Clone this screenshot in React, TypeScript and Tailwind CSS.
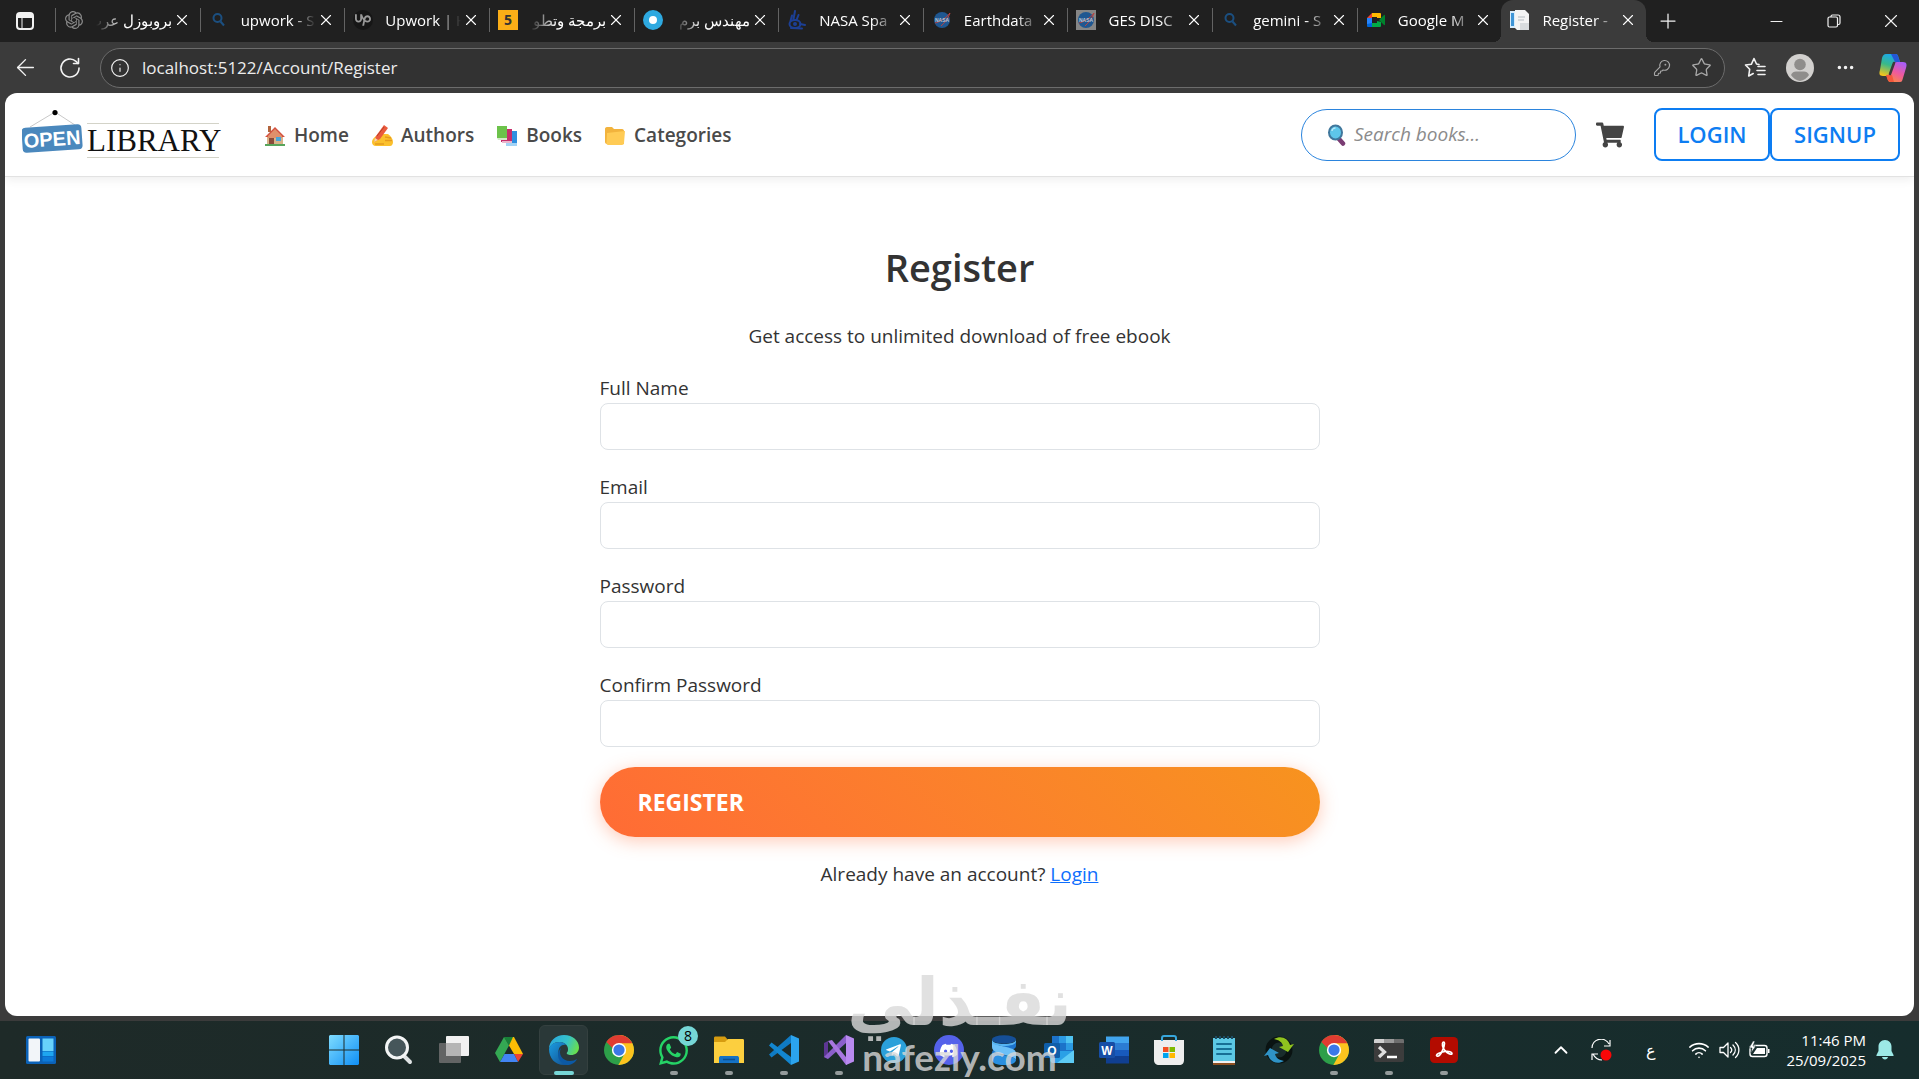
import type { ReactNode } from 'react';
import { ArrowLeft, ChevronUp, Info, KeyRound, Minus, MoreHorizontal, Plus, Star, Wifi, X } from 'lucide-react';
import { FaDiscord, FaShoppingCart, FaTelegramPlane, FaWhatsapp } from 'react-icons/fa';
import { SiOpenai, SiUpwork } from 'react-icons/si';

/* ---------- tab favicons ---------- */

const SearchFavicon = () => (
  <svg viewBox="0 0 20 20" className="size-5" fill="none" stroke="#1b4f80" strokeWidth="2">
    <circle cx="8.5" cy="8" r="4" />
    <path d="M11.5 11.5 15 15.5" />
  </svg>
);

const NasaFavicon = () => (
  <svg viewBox="0 0 20 20" className="size-5">
    <circle cx="10" cy="10" r="8" fill="#1f5791" />
    <path d="M3 13C8 12 14 8 18 3c-2 6-5 9-9 13" fill="none" stroke="#b8423f" strokeWidth="1" />
    <text x="10" y="12" textAnchor="middle" fontSize="5" fontWeight="700" fill="#b9c7d6" fontFamily="Liberation Sans">NASA</text>
  </svg>
);

const HandFavicon = () => (
  <svg viewBox="0 0 20 20" className="size-5" fill="none" stroke="#1c3f94" strokeWidth="2" strokeLinecap="round">
    <ellipse cx="8" cy="14" rx="5.5" ry="4" />
    <path d="M3.500 11 5 5.500M6.500 9 8 1M9.500 10l2-5M13 14l5 1M4 18l11 .500" />
    <circle cx="8" cy="14" r="1" />
  </svg>
);

const MeetFavicon = () => (
  <svg viewBox="0 0 20 20" className="size-5">
    <path d="M6 3 1 8h5z" fill="#ea4335" />
    <path d="M1 8h5v6H1z" fill="#2684fc" />
    <path d="M1 14v2a1 1 0 0 0 1 1h4v-4z" fill="#0066da" />
    <path d="M6 3h8a1 1 0 0 1 1 1v4h-4V7H6z" fill="#ffba00" />
    <path d="M6 13h5v-2l4 1v4a1 1 0 0 1-1 1H6z" fill="#00ac47" />
    <path d="m13 10 5-5c.5-.4 1 0 1 .5v9c0 .5-.5.9-1 .5z" fill="#00832d" />
  </svg>
);

const PageFavicon = () => (
  <svg viewBox="0 0 20 20" className="size-5">
    <path d="M0 1h5v17H0z" fill="#d7ecfb" />
    <path d="M1 3h3v13H1z" fill="#3f95d6" />
    <path d="M5 0h10l4 4v16H7l-2-2z" fill="#f4f4f4" />
    <path d="M8 7h7M8 10h6" stroke="#b5bcc2" />
    <path d="M10 13h9v7h-9z" fill="#d9dcde" />
  </svg>
);

type Tab = { title: string; icon: ReactNode; rtl?: boolean; active?: boolean };

const tabs: Tab[] = [
  { title: 'بروبوزل عرب', icon: <SiOpenai className="size-[18px] text-[#8a8a8a]" />, rtl: true },
  { title: 'upwork - S', icon: <SearchFavicon /> },
  {
    title: 'Upwork | H',
    icon: (
      <span className="flex size-5 items-center justify-center rounded-full bg-[#161616] text-[#999]">
        <SiUpwork className="size-4" />
      </span>
    ),
  },
  {
    title: 'برمجة وتطو',
    icon: (
      <span className="flex size-5 items-center justify-center bg-[#fbae17] text-sm font-bold text-[#333]">5</span>
    ),
    rtl: true,
  },
  { title: 'مهندس برم', icon: <span className="size-5 rounded-full border-[6px] border-[#2ea9e0] bg-white" />, rtl: true },
  { title: 'NASA Spa', icon: <HandFavicon /> },
  { title: 'Earthdata', icon: <NasaFavicon /> },
  {
    title: 'GES DISC',
    icon: (
      <span className="size-5 bg-[#868686]">
        <NasaFavicon />
      </span>
    ),
  },
  { title: 'gemini - S', icon: <SearchFavicon /> },
  { title: 'Google M', icon: <MeetFavicon /> },
  { title: 'Register -', icon: <PageFavicon />, active: true },
];

const BrowserTab = ({ tab }: { tab: Tab }) => (
  <div
    className={`relative flex min-w-0 flex-1 items-center pb-0.5 ${
      tab.active
        ? 'rounded-t-xl bg-[#3b3b3b] before:absolute before:bottom-0 before:-left-2 before:size-2 before:bg-[radial-gradient(circle_at_0_0,transparent_8px,#3b3b3b_8px)] after:absolute after:-right-2 after:bottom-0 after:size-2 after:bg-[radial-gradient(circle_at_100%_0,transparent_8px,#3b3b3b_8px)]'
        : ''
    }`}
  >
    <span className={`h-6 w-px shrink-0 ${tab.active ? '' : 'bg-[#636363]'}`} />
    <span className="ml-2 flex size-5 shrink-0 items-center justify-center">{tab.icon}</span>
    <span
      dir={tab.rtl ? 'rtl' : 'ltr'}
      className={`ml-3 min-w-0 flex-1 overflow-hidden text-[15px] leading-6 whitespace-nowrap text-white ${
        tab.rtl
          ? '[mask-image:linear-gradient(to_left,black_65%,transparent)]'
          : '[mask-image:linear-gradient(to_right,black_70%,transparent)]'
      }`}
    >
      {tab.title}
    </span>
    <button type="button" aria-label="Close tab" className="mr-2 flex size-5 items-center justify-center text-white">
      <X size={18} strokeWidth={1.5} />
    </button>
  </div>
);

const CopilotIcon = () => (
  <svg viewBox="0 0 32 32" className="size-8">
    <defs>
      <linearGradient id="cp1" x1="0.6" y1="0" x2="0.3" y2="1">
        <stop offset="0" stopColor="#1aa7f0" />
        <stop offset=".5" stopColor="#38b98a" />
        <stop offset="1" stopColor="#f3c51d" />
      </linearGradient>
      <linearGradient id="cp2" x1="0.7" y1="0" x2="0.2" y2="1">
        <stop offset="0" stopColor="#a95df5" />
        <stop offset=".5" stopColor="#ef5a9c" />
        <stop offset="1" stopColor="#fb8b3c" />
      </linearGradient>
    </defs>
    <path d="M9 2h9c3 0 3 2 4 5l1 3h-4c-3 0-3.500 3-4.500 6l-1.500 4c-1 3-2 4-4 4H6c-4 0-4-3-3-6L5 6c1-3 2-4 4-4z" fill="url(#cp1)" />
    <path d="M14 2h4c3 0 3 2 4 5l1 3h-5z" fill="#2457d6" />
    <path d="M23 30h-9c-3 0-3-2-4-5l-1-2c3 0 4-1 5-4l2-5c1-3 2-4 4-4h6c4 0 4 3 3 6l-3 10c-1 3-1 4-3 4z" fill="url(#cp2)" />
    <path d="M9 23h6l2 7h-3c-2 0-3-1-4-4z" fill="#f3583c" />
    <path d="m17 11-4 11" stroke="#3b3b3b" strokeWidth="2.500" strokeLinecap="round" />
  </svg>
);

const BrowserChrome = () => (
  <header className="text-[#f2f2f2]">
    <div className="flex h-[42px] bg-[#202020]">
      <button type="button" aria-label="Tab actions" className="flex w-[55px] shrink-0 items-center pl-4">
        <svg viewBox="0 0 18 18" className="size-[18px]" fill="none" stroke="currentColor" strokeWidth="2">
          <rect x="1" y="1" width="16" height="16" rx="3" />
          <path d="M1 4h16" strokeWidth="4" />
          <path d="M6 5v12" strokeWidth="1" />
        </svg>
      </button>
      <div className="flex min-w-0 flex-1">
        {tabs.map((t) => (
          <BrowserTab key={t.title} tab={t} />
        ))}
      </div>
      <div className="flex w-[273px] shrink-0 items-center">
        <button type="button" aria-label="New tab" className="mr-auto ml-2 flex w-7 justify-center">
          <Plus size={24} strokeWidth={1.25} />
        </button>
        <button type="button" aria-label="Minimize" className="flex w-[58px] justify-center">
          <Minus size={19} strokeWidth={1.25} />
        </button>
        <button type="button" aria-label="Restore" className="flex w-[58px] justify-center">
          <svg viewBox="0 0 14 14" className="size-[14px]" fill="none" stroke="currentColor" strokeWidth="1.2">
            <rect x="1" y="3" width="9.5" height="10" rx="1.5" />
            <path d="M4 3V2.5C4 1.5 4.500 1 5.500 1H11c1.500 0 2 .5 2 2v6c0 1-.5 1.500-1.500 1.500h-1" />
          </svg>
        </button>
        <button type="button" aria-label="Close" className="flex w-[56px] justify-center">
          <X size={22} strokeWidth={1.25} />
        </button>
      </div>
    </div>

    <div className="flex h-[51px] items-center bg-[#3b3b3b]">
      <button type="button" aria-label="Back" className="flex w-[50px] justify-center">
        <ArrowLeft size={27} strokeWidth={1.25} />
      </button>
      <button type="button" aria-label="Refresh" className="flex w-10 justify-center">
        <svg viewBox="0 0 22 22" className="size-[22px]" fill="none" stroke="currentColor" strokeWidth="1.6" strokeLinecap="round" strokeLinejoin="round">
          <path d="M20 11a9 9 0 1 1-3-6.700L19 6.500" />
          <path d="M19.500 1.500v5h-5" />
        </svg>
      </button>
      <div className="ml-[10px] flex h-10 min-w-0 flex-1 items-center rounded-full border border-[#6c6c6c] bg-[#323232] pr-3 pl-[9px]">
        <Info size={20} strokeWidth={1.4} className="shrink-0" />
        <input
          aria-label="Address"
          defaultValue="localhost:5122/Account/Register"
          className="ml-3 min-w-0 flex-1 bg-transparent text-[17px] text-[#ececec] outline-none"
        />
        <button type="button" aria-label="Saved password" className="mr-5 text-[#a8a8a8]">
          <KeyRound size={18} strokeWidth={1.5} />
        </button>
        <button type="button" aria-label="Add to favorites" className="text-[#a8a8a8]">
          <Star size={21} strokeWidth={1.5} />
        </button>
      </div>
      <button type="button" aria-label="Favorites" className="ml-2 flex w-11 justify-center">
        <svg viewBox="0 0 22 22" className="size-[22px]" fill="none" stroke="currentColor" strokeWidth="1.600" strokeLinecap="round" strokeLinejoin="round">
          <path d="M15 7.500 12.500 7 10 1.500 7.300 7.300 1.500 8l4.200 4.200-1 6.800 4.500-2.500M14 9.500h7M13 13.500h8M14 17.500h7" />
        </svg>
      </button>
      <button type="button" aria-label="Profile" className="flex w-[46px] justify-center">
        <svg viewBox="0 0 28 28" className="size-7">
          <circle cx="14" cy="14" r="14" fill="#d2d0ce" />
          <circle cx="14" cy="10.500" r="5.800" fill="#8f8d8b" />
          <path d="M5 21c1-2.500 3-3.500 5-3.500h8c2 0 4 1 5 3.500a14 14 0 0 1-9 6 14 14 0 0 1-9-6z" fill="#8f8d8b" />
        </svg>
      </button>
      <button type="button" aria-label="Settings and more" className="flex w-11 justify-center">
        <MoreHorizontal size={21} />
      </button>
      <button type="button" aria-label="Copilot" className="flex w-[52px] justify-center">
        <CopilotIcon />
      </button>
    </div>
  </header>
);

/* ---------- site navbar ---------- */

const Logo = () => (
  <svg viewBox="0 2 200 50" className="h-[50px] w-[200px]" role="img" aria-label="Open Library">
    <path d="M8 19 33 4l23 15" fill="none" stroke="#c9c9c9" />
    <circle cx="33" cy="4.600" r="2.600" fill="#000" />
    <g transform="rotate(-4 30 30)">
      <rect x="0" y="18" width="60" height="25" rx="4" fill="#4a88bd" />
      <text x="30" y="38" textAnchor="middle" fontFamily="Liberation Sans" fontWeight="700" fontSize="20" fill="#fff">OPEN</text>
    </g>
    <path d="M65 15.500h132M65 49.500h132" stroke="#d3d3c8" />
    <text x="65" y="43" fontFamily="Liberation Serif" fontSize="31" fill="#111">LIBRARY</text>
  </svg>
);

const HouseIcon = () => (
  <svg viewBox="0 0 22 22" className="size-[22px]">
    <path d="M4 1h3v6H4z" fill="#b2643c" />
    <path d="M3 10h16v10H3z" fill="#d8b48a" />
    <path d="M11 2 1 12h3l7-7 7 7h3z" fill="#d3503f" />
    <path d="M11 4 4 11v2h14v-2z" fill="#e0906b" />
    <path d="M5 13h5v7H5z" fill="#8a4b3a" />
    <path d="M12 12h5v4h-5z" fill="#4aa5d8" />
    <path d="M1 19h20v2H1z" fill="#58a55c" />
  </svg>
);

const WritingIcon = () => (
  <svg viewBox="0 0 22 22" className="size-[22px]">
    <path d="M1 17c0-3 3-6 8-8l8 0c3 2 5 5 5 8 0 2-1 4-3 4H5c-3 0-4-2-4-4z" fill="#fbc02d" />
    <path d="m14 12 6 1M14 15.500h7M4 19h9" fill="none" stroke="#e59a1f" strokeWidth="1.300" />
    <path d="m3 17 2-6L13 0l4 3-8 11z" fill="#ea5a3d" />
    <path d="M6 11 13 2" stroke="#b93e2a" />
    <path d="m3 17 1-4 3 2z" fill="#f7d9a8" />
  </svg>
);

const BooksIcon = () => (
  <svg viewBox="0 0 22 22" className="size-[22px]">
    <path d="M10 6h11v14H10z" fill="#2f8fe0" />
    <path d="M10 18h11v3H10z" fill="#a3d3f5" />
    <path d="M5 4h11v13H5z" fill="#c72d6b" />
    <path d="M6 16h10v2H6z" fill="#e9b7cc" />
    <path d="M1 1h10v12H1z" fill="#6cc24a" />
    <path d="M1 13h10v2H2z" fill="#d4e9c8" />
  </svg>
);

const FolderIcon = () => (
  <svg viewBox="0 0 22 22" className="size-[22px]">
    <path d="M1 4c0-1 .5-2 2-2h5l2 2h8c1.500 0 2 1 2 2v13H3c-1 0-2-1-2-2z" fill="#f2b33d" />
    <path d="M3 8 21 6l-1 12c0 1-1 2-2 2H4c-1 0-1.500-1-1.500-2z" fill="#ffcb55" />
  </svg>
);

const MagnifierIcon = () => (
  <svg viewBox="0 0 20 22" className="h-[22px] w-5">
    <path d="m13 15 4 4.500" stroke="#7a3c73" strokeWidth="4.500" strokeLinecap="round" />
    <ellipse cx="9.500" cy="8.500" rx="6.500" ry="7" fill="#5ec6ea" stroke="#40779c" strokeWidth="2" />
    <path d="M6 7c0-2 2-3 3.500-3" fill="none" stroke="#b9e9f8" strokeWidth="1.500" />
  </svg>
);

const navLinks = [
  { label: 'Home', icon: <HouseIcon /> },
  { label: 'Authors', icon: <WritingIcon /> },
  { label: 'Books', icon: <BooksIcon /> },
  { label: 'Categories', icon: <FolderIcon /> },
];

const Navbar = () => (
  <nav className="flex h-[84px] items-center border-b border-[#e2e2e2] pr-[14px] pl-[17px] shadow-[0_2px_10px_rgba(0,0,0,0.08)]">
    <a href="#" className="shrink-0">
      <Logo />
    </a>
    <div className="ml-[42px] flex items-center gap-[22px] pt-0.5">
      {navLinks.map((l) => (
        <a key={l.label} href="#" className="flex items-center gap-2 text-[19px] font-semibold text-[#4a4a4a]">
          {l.icon}
          {l.label}
        </a>
      ))}
    </div>
    <div className="ml-auto flex items-center">
      <label className="flex h-[52px] w-[275px] items-center gap-2 rounded-full border border-[#2b84dd] px-6">
        <MagnifierIcon />
        <input
          type="search"
          aria-label="Search books"
          placeholder="Search books..."
          className="min-w-0 flex-1 bg-transparent text-[19px] italic outline-none placeholder:text-[#8b8b8b]"
        />
      </label>
      <a href="#" aria-label="Cart" className="ml-5 text-[#444]">
        <FaShoppingCart size={28} />
      </a>
      <a href="#" className="ml-[30px] flex h-[53px] w-[116px] items-center justify-center rounded-lg border-2 border-[#0d7df2] text-[22px] font-semibold text-[#0d7df2]">
        LOGIN
      </a>
      <a href="#" className="flex h-[53px] w-[130px] items-center justify-center rounded-lg border-2 border-[#0d7df2] text-[22px] font-semibold text-[#0d7df2]">
        SIGNUP
      </a>
    </div>
  </nav>
);

/* ---------- register form ---------- */

const Field = ({ id, label, type = 'text' }: { id: string; label: string; type?: string }) => (
  <div>
    <label htmlFor={id} className="block leading-[30px]">
      {label}
    </label>
    <input id={id} type={type} className="block h-[47px] w-full rounded-lg border border-[#dee2e6] px-4 outline-none" />
  </div>
);

const RegisterForm = () => (
  <main className="mx-auto w-full max-w-[720px] flex-1 pt-[66px] text-[19px] text-[#333]">
    <h1 className="text-center text-[38px] leading-[48px] font-semibold">Register</h1>
    <p className="mt-[30px] text-center leading-[30px]">Get access to unlimited download of free ebook</p>
    <form className="mt-[22px]" onSubmit={(e) => e.preventDefault()}>
      <div className="space-y-[22px]">
        <Field id="fullName" label="Full Name" />
        <Field id="email" label="Email" type="email" />
        <Field id="password" label="Password" type="password" />
        <Field id="confirmPassword" label="Confirm Password" type="password" />
      </div>
      <button
        type="submit"
        className="mt-5 flex h-[70px] w-full items-center rounded-full bg-linear-45 from-[#ff6b35] to-[#f7931e] px-[38px] text-[23px] font-bold text-white shadow-[0_4px_18px_rgba(255,107,53,0.35)]"
      >
        REGISTER
      </button>
    </form>
    <p className="mt-[22px] text-center leading-[30px]">
      Already have an account?{' '}
      <a href="#" className="text-[#0d6efd] underline">
        Login
      </a>
    </p>
  </main>
);

/* ---------- taskbar ---------- */

const WindowsIcon = () => (
  <svg viewBox="0 0 30 30" className="size-[30px]">
    <defs>
      <linearGradient id="win" x1="0" y1="0" x2="1" y2="1">
        <stop offset="0" stopColor="#7fdcff" />
        <stop offset="1" stopColor="#0f8ff5" />
      </linearGradient>
    </defs>
    <path d="M1 0h13.500v14.500H0V1zM15.500 0H29l1 1v13.500H15.500zM0 15.500h14.500V30H1l-1-1zM15.500 15.500H30V29l-1 1H15.500z" fill="url(#win)" />
  </svg>
);

const TaskSearchIcon = () => (
  <svg viewBox="0 0 30 30" className="size-[30px]">
    <path d="m19 20 7 7" stroke="#dfe3e4" strokeWidth="4" strokeLinecap="round" />
    <circle cx="13" cy="12.500" r="10.500" fill="#46565a" stroke="#f3f5f5" strokeWidth="3" />
  </svg>
);

const TaskViewIcon = () => (
  <svg viewBox="0 0 30 30" className="size-[30px]">
    <rect x="7" y="1" width="23" height="20" rx="1" fill="#f1f1f1" />
    <rect x="0" y="8" width="22" height="20" rx="1" fill="#6f6f6f" fillOpacity=".85" />
    <path d="M7 8h15v13H7z" fill="#b5b5b5" />
  </svg>
);

const DriveIcon = () => (
  <svg viewBox="0 0 30 30" className="size-[30px]">
    <path d="M10 2h10l-5 8.500z" fill="#188038" />
    <path d="M10 2 1 18l5 9 9-16.500z" fill="#34a853" />
    <path d="M20 2h-1l-4 8.500 5 8.500h9z" fill="#fbbc04" />
    <path d="M29 19H20l4 8z" fill="#ea4335" />
    <path d="M10.500 19H20l4 8H6z" fill="#4285f4" />
  </svg>
);

const EdgeIcon = () => (
  <svg viewBox="0 0 30 30" className="size-[30px]">
    <defs>
      <linearGradient id="edgeTop" x1="0" y1="0.3" x2="1" y2="0.6">
        <stop offset="0" stopColor="#2aa8dd" />
        <stop offset=".55" stopColor="#35c1c9" />
        <stop offset="1" stopColor="#6be04a" />
      </linearGradient>
      <linearGradient id="edgeMid" x1="0" y1="0" x2="1" y2="1">
        <stop offset="0" stopColor="#1b9de2" />
        <stop offset="1" stopColor="#114a8b" />
      </linearGradient>
    </defs>
    <path d="M15 0c9 0 15 6 15 12.500 0 5-4 7.500-8 7.500-3 0-5-1-4-2.500 1-1.200 1-2 1-3.500 0-4-4-7-8.500-7C5 7 1 10.500 0 14 0 6 7 0 15 0z" fill="url(#edgeTop)" />
    <path d="M0 14C1 10 5 7 10.500 7c3 0 5.500 1 7 3-5-1-8 2-8 7 0 7 5 12 11 12-2 .8-4 1-5.500 1C6 30 0 23 0 14z" fill="url(#edgeMid)" />
    <path d="M12 13c-3 6 1 13 9 13 3 0 5-1 7-2-2 4-6 6-10 6-8-1-12-11-6-17z" fill="#0c59a4" />
  </svg>
);

const ChromeIcon = () => (
  <svg viewBox="4 4 40 40" className="size-[30px]">
    <circle cx="24" cy="24" r="20" fill="#2d9f49" />
    <path d="M24 4v20l8 4-8.840 16H24a20 20 0 0 0 0-40z" fill="#fcc31e" />
    <path d="M41.840 15H24v13l-3-1L7.140 13.260C10.680 7.690 16.910 4 24 4c7.800 0 14.550 4.480 17.840 11z" fill="#e03c31" />
    <circle cx="24" cy="24" r="9.500" fill="#fff" />
    <circle cx="24" cy="24" r="7.500" fill="#3b78e7" />
  </svg>
);

const WhatsAppIcon = () => (
  <span className="relative">
    <FaWhatsapp size={33} className="text-[#25d366]" />
    <span className="absolute -top-2 -right-2 flex size-5 items-center justify-center rounded-full bg-[#76d6d6] text-sm text-black">8</span>
  </span>
);

const ExplorerIcon = () => (
  <svg viewBox="0 0 30 30" className="size-[30px]">
    <path d="M0 3c0-1 .5-1.500 1.500-1.500H11L14 5v4H0z" fill="#d69c10" />
    <path d="M0 7h11l3-3h14.500c1 0 1.500.5 1.500 1.500V28H0z" fill="#fccf3f" />
    <path d="M5 28v-5c0-1.500 1-2 2-2h16c1 0 2 .5 2 2v5z" fill="#1572c4" />
    <path d="M9 24.500h12" stroke="#0b4f91" strokeWidth="1.500" />
  </svg>
);

const VSCodeIcon = () => (
  <svg viewBox="0 0 30 30" className="size-[30px]">
    <path d="m0 19.500 2.500 3L22 8V0z" fill="#0f7bc4" />
    <path d="m0 10.500 2.500-3L22 22v8z" fill="#1286d0" />
    <path d="m22 0 8 3.500v23L22 30z" fill="#2ba4ee" />
  </svg>
);

const VisualStudioIcon = () => (
  <svg viewBox="0 0 30 30" className="size-[30px]">
    <path d="M0 8v14l4 2V6z" fill="#5d3694" />
    <path d="M4 24 22 8V0L0 22z" fill="#8b5fcb" />
    <path d="m4 6 18 24 4-3L8 5z" fill="#a877e0" />
    <path d="m22 0 8 3.500v23L22 30z" fill="#b98af0" />
  </svg>
);

const TelegramIcon = () => (
  <span className="flex size-[26px] items-center justify-center rounded-full bg-[#2ba0da] text-white">
    <FaTelegramPlane size={17} />
  </span>
);

const DiscordIcon = () => (
  <span className="flex size-[30px] items-center justify-center rounded-full bg-[#5562ea] text-white">
    <FaDiscord size={19} />
  </span>
);

const RibbonIcon = () => (
  <svg viewBox="0 0 26 30" className="h-[30px] w-[26px]">
    <path d="M25 5v6c0 3-5 4.500-10 6L4 22c-2 1-3 2-3 3v-7c0-4 5-5 10-6.500S25 9 25 5z" fill="#1d74cc" />
    <path d="M1 5v7c0 5 7 6 13 8s11 3 11 5v-7c0-4-6-5-12-6.500S1 9 1 5z" fill="#6cc0f7" />
    <path d="M1 18v7c0 3 5 5 12 5s12-2 12-5c0-2-4-3-8-4l-4-1C6 19 1 20 1 18z" fill="#2a8fe0" />
    <ellipse cx="13" cy="4.500" rx="12" ry="4.200" fill="#154f97" />
    <path d="M1 4.500c0 6 24 6 24 0v2c0 6-24 6-24 0z" fill="#55b3f2" />
  </svg>
);

const OutlookIcon = () => (
  <svg viewBox="0 0 30 30" className="size-[30px]">
    <path d="M8 1h21v15H8z" fill="#1c72c9" />
    <path d="M15 1h7v7h-7zM22 8h7v7h-7z" fill="#2c9ae3" />
    <path d="M22 1h7v7h-7z" fill="#4fc3f1" />
    <path d="M6 16h24v12H8l-2-2z" fill="#2aa0e6" />
    <path d="m30 15-17 13h17z" fill="#5dcbf5" />
    <rect x="0" y="8" width="16" height="15" rx="1.500" fill="#0f5ea9" />
    <text x="8" y="20" textAnchor="middle" fontSize="12" fontWeight="700" fill="#fff" fontFamily="Liberation Sans">O</text>
  </svg>
);

const WordIcon = () => (
  <svg viewBox="0 0 30 30" className="size-[30px]">
    <path d="M7 1.500h23V9H7z" fill="#41a5ee" />
    <path d="M7 8h23v7H7z" fill="#2b7cd3" />
    <path d="M7 15h23v7H7z" fill="#185abd" />
    <path d="M7 21h23v7.500H7z" fill="#103f91" />
    <rect x="0" y="7" width="16" height="16" rx="1.500" fill="#174ea6" />
    <text x="8" y="19.500" textAnchor="middle" fontSize="12" fontWeight="700" fill="#fff" fontFamily="Liberation Sans">W</text>
  </svg>
);

const StoreIcon = () => (
  <svg viewBox="0 0 30 30" className="size-[30px]">
    <path d="M0 5h30v20c0 3-1.500 5-5 5H5c-3 0-5-1.500-5-5z" fill="#eeeeee" />
    <path d="M8 6V3c0-1.500.5-2 2-2h10c1.500 0 2 .5 2 2v3" fill="none" stroke="#37a7dd" strokeWidth="2" />
    <path d="M9 12h5.500v5H9z" fill="#f25022" />
    <path d="M15.500 12H21v5h-5.500z" fill="#7fba00" />
    <path d="M9 18h5.500v5H9z" fill="#00a4ef" />
    <path d="M15.500 18H21v5h-5.500z" fill="#ffb900" />
  </svg>
);

const NotepadIcon = () => (
  <svg viewBox="0 0 24 30" className="h-[30px] w-6">
    <path d="M1 25h22v5H1z" fill="#8d4f21" />
    <path d="M1 24h22v4H1z" fill="#f1f1f1" />
    <path d="M1 3h22v23H1z" fill="#5cc8e4" />
    <path d="M4 1v3M8 1v3M12 1v3M16 1v3M20 1v3" stroke="#1c4c63" strokeWidth="2" />
    <path d="M5 9h14M5 14h14M5 19h14" stroke="#176f95" strokeWidth="2" strokeLinecap="round" />
  </svg>
);

const SyncArrowsIcon = () => (
  <svg viewBox="0 0 30 30" className="size-[30px]">
    <circle cx="15" cy="15" r="10.500" fill="none" stroke="#0a1312" strokeWidth="6" />
    <path d="M10 4c7-4 14-1 16 6l4-1-6 8-9-5 4-1c-1-4-4-6-9-7z" fill="#8fc31f" />
    <path d="M20 26c-7 4-14 1-16-6l-4 1 6-8 9 5-4 1c1 4 4 6 9 7z" fill="#2f93c6" />
  </svg>
);

const TerminalIcon = () => (
  <svg viewBox="0 0 30 30" className="size-[30px]">
    <rect x="0" y="4" width="30" height="23" rx="2" fill="#3c3c3c" />
    <path d="M0 8V5.500C0 4.500.5 4 1.500 4H10v4z" fill="#d0d0d0" />
    <path d="M10 4h10v4H10z" fill="#9a9a9a" />
    <path d="M20 4h8.500c1 0 1.500.5 1.500 1.500V8H20z" fill="#6e6e6e" />
    <path d="m5 12 5.500 5L5 22" fill="none" stroke="#dedede" strokeWidth="3.200" />
    <path d="M13 22h10" stroke="#fff" strokeWidth="2.500" />
  </svg>
);

const AcrobatIcon = () => (
  <svg viewBox="0 0 28 28" className="size-7">
    <rect x="0" y="1" width="28" height="26" rx="4.500" fill="#b30b00" />
    <path d="M7 20c-2-1 3-4 8-4.500 4-.5 7 .5 7 2s-3 .5-5-1c-3-2-5-6-4.500-9 .3-2 2-2 2 0C14.500 11 10 22 7 20z" fill="none" stroke="#fff" strokeWidth="1.700" />
  </svg>
);

type App = { name: string; icon: ReactNode; open?: boolean; active?: boolean };

const apps: App[] = [
  { name: 'Start', icon: <WindowsIcon /> },
  { name: 'Search', icon: <TaskSearchIcon /> },
  { name: 'Task View', icon: <TaskViewIcon /> },
  { name: 'Google Drive', icon: <DriveIcon /> },
  { name: 'Microsoft Edge', icon: <EdgeIcon />, active: true },
  { name: 'Google Chrome', icon: <ChromeIcon /> },
  { name: 'WhatsApp', icon: <WhatsAppIcon />, open: true },
  { name: 'File Explorer', icon: <ExplorerIcon />, open: true },
  { name: 'VS Code', icon: <VSCodeIcon />, open: true },
  { name: 'Visual Studio', icon: <VisualStudioIcon />, open: true },
  { name: 'Telegram', icon: <TelegramIcon /> },
  { name: 'Discord', icon: <DiscordIcon /> },
  { name: 'Storage', icon: <RibbonIcon /> },
  { name: 'Outlook', icon: <OutlookIcon /> },
  { name: 'Word', icon: <WordIcon /> },
  { name: 'Store', icon: <StoreIcon /> },
  { name: 'Notepad', icon: <NotepadIcon /> },
  { name: 'Sync', icon: <SyncArrowsIcon /> },
  { name: 'Chrome profile', icon: <ChromeIcon />, open: true },
  { name: 'Terminal', icon: <TerminalIcon />, open: true },
  { name: 'Acrobat', icon: <AcrobatIcon />, open: true },
];

const Taskbar = () => (
  <footer className="flex h-[58px] items-center bg-linear-to-r from-[#1e2a28] to-[#162d2d] text-white">
    <button type="button" aria-label="Widgets" className="ml-[26px] shrink-0">
      <svg viewBox="0 0 30 28" className="h-7 w-[30px]">
        <rect width="30" height="28" rx="1.500" fill="#0b62b8" />
        <rect x="2.500" y="2.500" width="11.500" height="23" rx="1" fill="#f2f5f9" />
        <path d="M16.500 2.500h11V15h-11z" fill="#68d2fb" />
        <path d="M16.500 15.500h11V20h-11z" fill="#1ea6f0" />
        <path d="M16.500 20.500h11v5h-11z" fill="#0d7ad8" />
      </svg>
    </button>
    <div className="ml-[260px] flex">
      {apps.map((a) => (
        <button
          key={a.name}
          type="button"
          aria-label={a.name}
          className="relative flex h-[50px] w-[55px] items-center justify-center"
        >
          {a.active && <span className="absolute inset-x-[3px] inset-y-0 rounded-md border border-[#34403f] bg-[#2a3838]" />}
          <span className="relative flex">{a.icon}</span>
          {a.active && <span className="absolute bottom-0 h-1 w-5 rounded-full bg-[#76d6d6]" />}
          {a.open && <span className="absolute bottom-0 h-1 w-2 rounded-full bg-[#949b9b]" />}
        </button>
      ))}
    </div>
    <div className="ml-auto flex shrink-0 items-center pr-[25px]">
      <button type="button" aria-label="Show hidden icons" className="mr-[18px]">
        <ChevronUp size={22} strokeWidth={2} />
      </button>
      <svg viewBox="0 0 22 22" className="mr-[34px] size-[22px]" fill="none" stroke="#fff" strokeWidth="1.200">
        <path d="M2 9A9 9 0 0 1 19 5M20 1v6h-6M2 21v-6h6M3 15c2 4 6 6 9 6" />
        <circle cx="16" cy="16" r="5.500" fill="#f90707" stroke="none" />
      </svg>
      <span className="mr-8 text-base">ع</span>
      <Wifi size={22} strokeWidth={1.75} className="mr-2" />
      <svg viewBox="0 0 22 22" className="mr-2 size-[22px]" fill="none" stroke="#fff" strokeWidth="1.300" strokeLinejoin="round" strokeLinecap="round">
        <path d="M2 8.500v5h3.500L10 18V4L5.500 8.500zM12.500 8.500c1.500 1.500 1.500 3.500 0 5M15 6c3 3 3 7 0 10M17.500 3.500c4.500 4 4.500 11 0 15" />
      </svg>
      <svg viewBox="0 0 22 22" className="mr-4 size-[22px]">
        <rect x="2" y="6.500" width="17" height="11" rx="2.500" fill="none" stroke="#fff" strokeWidth="1.400" />
        <path d="M9 9h8v6H5z" fill="#fff" />
        <path d="M20 10h1.500v4H20z" fill="#fff" />
        <path d="M5 2 1 9h3l-1 5 5-7H5l2-5z" fill="#fff" stroke="#162d2d" strokeWidth=".6" />
      </svg>
      <div className="text-right text-[15px] leading-5">
        <div>11:46 PM</div>
        <div>25/09/2025</div>
      </div>
      <svg viewBox="0 0 18 22" className="ml-[10px] h-[22px] w-[18px]" fill="#9ce9e6">
        <path d="M9 1c4 0 6.500 3 6.500 6.500V12l2 4c.3.700 0 1-.5 1H1c-.5 0-.8-.3-.5-1l2-4V7.500C2.500 4 5 1 9 1zM6 18h6c-.3 1.500-1.500 2.500-3 2.500S6.300 19.500 6 18z" />
      </svg>
    </div>
  </footer>
);

const Watermark = () => (
  <div className="pointer-events-none absolute bottom-1 left-1/2 flex -translate-x-1/2 flex-col items-center font-bold text-[#d9d9d9]/80">
    <span dir="rtl" className="font-['DejaVu_Sans',sans-serif] text-[66px] leading-[72px]">نفـذلي</span>
    <span className="font-['Lato',sans-serif] text-[37px] leading-9">nafezly.com</span>
  </div>
);

export default function App() {
  return (
    <div className="relative flex min-h-screen flex-col bg-[#3b3b3b] font-['Open_Sans','Noto_Sans',sans-serif]">
      <BrowserChrome />
      <div className="mx-[5px] mb-[5px] flex flex-1 flex-col overflow-hidden rounded-xl bg-white">
        <Navbar />
        <RegisterForm />
      </div>
      <Taskbar />
      <Watermark />
    </div>
  );
}
